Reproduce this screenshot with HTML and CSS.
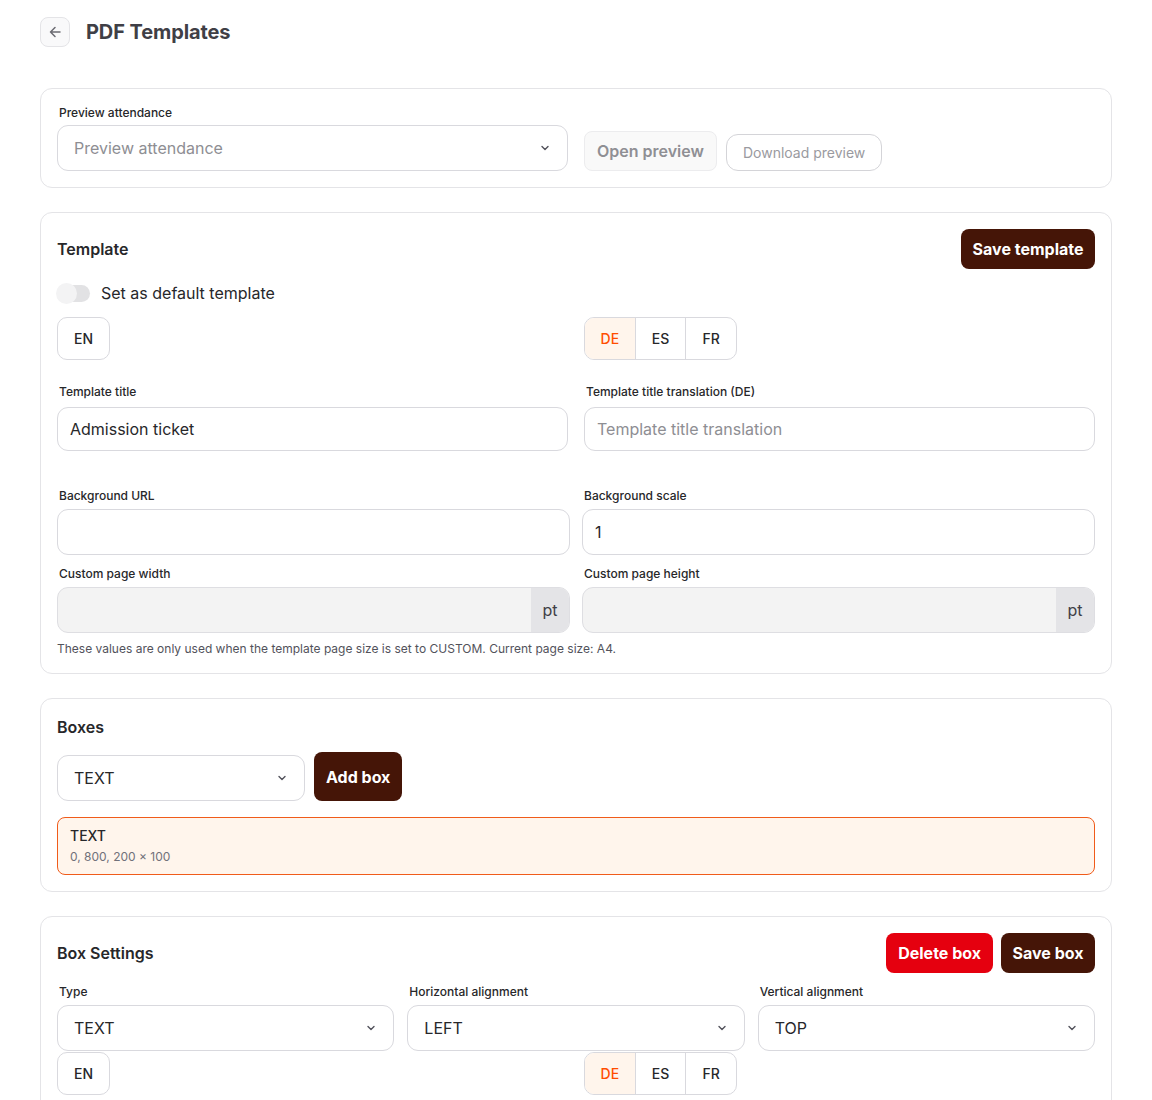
FILE: index.html
```html
<!DOCTYPE html>
<html lang="en">
<head>
<meta charset="utf-8">
<title>PDF Templates</title>
<link rel="stylesheet" href="styles.css">
</head>
<body>
<div class="page">
  <header class="topbar">
    <button class="back-btn" aria-label="Back">
      <svg width="16" height="16" viewBox="0 0 16 16" fill="none" stroke="#6b6b72" stroke-width="1.5" stroke-linecap="round" stroke-linejoin="round"><path d="M13 8H3.5M8 3.5 3.5 8 8 12.5"/></svg>
    </button>
    <h1 class="page-title">PDF Templates</h1>
  </header>

  <section class="card preview-card">
    <div class="grid-2">
      <div class="field">
        <label class="label">Preview attendance</label>
        <div class="select placeholder"><span>Preview attendance</span><svg class="chev" width="12" height="12" viewBox="0 0 12 12" fill="none" stroke="#52525b" stroke-width="1.4" stroke-linecap="round" stroke-linejoin="round"><path d="M3 4.5 6 7.5 9 4.5"/></svg></div>
      </div>
      <div class="preview-actions">
        <button class="btn-disabled">Open preview</button>
        <button class="btn-outline">Download preview</button>
      </div>
    </div>
  </section>

  <section class="card">
    <div class="card-head">
      <h2 class="card-title">Template</h2>
      <button class="btn-dark">Save template</button>
    </div>
    <div class="toggle-row">
      <span class="toggle"><span class="knob"></span></span>
      <span class="toggle-label">Set as default template</span>
    </div>
    <div class="grid-2 lang-row">
      <div><span class="lang-single">EN</span></div>
      <div class="lang-group"><span class="lang active">DE</span><span class="lang">ES</span><span class="lang">FR</span></div>
    </div>
    <div class="grid-2 title-row">
      <div class="field">
        <label class="label">Template title</label>
        <div class="input"><span>Admission ticket</span></div>
      </div>
      <div class="field">
        <label class="label">Template title translation (DE)</label>
        <div class="input placeholder"><span>Template title translation</span></div>
      </div>
    </div>
    <div class="grid-2 tight bg-row">
      <div class="field">
        <label class="label">Background URL</label>
        <div class="input tall"></div>
      </div>
      <div class="field">
        <label class="label">Background scale</label>
        <div class="input tall"><span>1</span></div>
      </div>
    </div>
    <div class="grid-2 tight size-row">
      <div class="field">
        <label class="label">Custom page width</label>
        <div class="input tall disabled"><span class="grow"></span><span class="suffix">pt</span></div>
      </div>
      <div class="field">
        <label class="label">Custom page height</label>
        <div class="input tall disabled"><span class="grow"></span><span class="suffix">pt</span></div>
      </div>
    </div>
    <p class="help">These values are only used when the template page size is set to CUSTOM. Current page size: A4.</p>
  </section>

  <section class="card">
    <h2 class="card-title boxes-title">Boxes</h2>
    <div class="add-row">
      <div class="select box-select"><span>TEXT</span><svg class="chev" width="12" height="12" viewBox="0 0 12 12" fill="none" stroke="#52525b" stroke-width="1.4" stroke-linecap="round" stroke-linejoin="round"><path d="M3 4.5 6 7.5 9 4.5"/></svg></div>
      <button class="btn-dark tall-btn">Add box</button>
    </div>
    <div class="box-item">
      <div class="box-name">TEXT</div>
      <div class="box-meta">0, 800, 200 × 100</div>
    </div>
  </section>

  <section class="card last-card">
    <div class="card-head">
      <h2 class="card-title">Box Settings</h2>
      <div class="head-actions">
        <button class="btn-red">Delete box</button>
        <button class="btn-dark">Save box</button>
      </div>
    </div>
    <div class="grid-3">
      <div class="field">
        <label class="label">Type</label>
        <div class="select"><span>TEXT</span><svg class="chev" width="12" height="12" viewBox="0 0 12 12" fill="none" stroke="#52525b" stroke-width="1.4" stroke-linecap="round" stroke-linejoin="round"><path d="M3 4.5 6 7.5 9 4.5"/></svg></div>
      </div>
      <div class="field">
        <label class="label">Horizontal alignment</label>
        <div class="select"><span>LEFT</span><svg class="chev" width="12" height="12" viewBox="0 0 12 12" fill="none" stroke="#52525b" stroke-width="1.4" stroke-linecap="round" stroke-linejoin="round"><path d="M3 4.5 6 7.5 9 4.5"/></svg></div>
      </div>
      <div class="field">
        <label class="label">Vertical alignment</label>
        <div class="select"><span>TOP</span><svg class="chev" width="12" height="12" viewBox="0 0 12 12" fill="none" stroke="#52525b" stroke-width="1.4" stroke-linecap="round" stroke-linejoin="round"><path d="M3 4.5 6 7.5 9 4.5"/></svg></div>
      </div>
    </div>
    <div class="grid-2 lang-row2">
      <div><span class="lang-single">EN</span></div>
      <div class="lang-group"><span class="lang active">DE</span><span class="lang">ES</span><span class="lang">FR</span></div>
    </div>
  </section>
</div>
</body>
</html>
```

FILE: styles.css
```css
* { box-sizing: border-box; }
html, body { margin: 0; padding: 0; background: #ffffff; }
body {
  font-family: Inter, "Noto Sans", "Liberation Sans", sans-serif;
  color: #27272a;
  -webkit-font-smoothing: antialiased;
}
button { font-family: inherit; cursor: pointer; }
.page { padding: 17px 40px 40px; }

.topbar { display: flex; align-items: center; gap: 16px; height: 30px; margin-bottom: 41px; }
.back-btn {
  width: 30px; height: 30px; border-radius: 8px;
  border: 1px solid #e4e4e7; background: #f9f9fa;
  display: flex; align-items: center; justify-content: center; padding: 0;
}
.page-title { margin: 0; font-size: 20px; font-weight: 700; color: #3f3f46; line-height: 30px; letter-spacing: -0.1px; }

.card {
  border: 1px solid #e4e4e7; border-radius: 12px;
  padding: 16px; margin-bottom: 24px; background: #fff;
}
.last-card { padding-bottom: 20px; }

.grid-2 { display: grid; grid-template-columns: 1fr 1fr; gap: 16px; }
.grid-2.tight { column-gap: 12px; }
.grid-3 { display: grid; grid-template-columns: 1fr 1fr 1fr; column-gap: 13px; }

.field { display: flex; flex-direction: column; }
.label { font-size: 12px; font-weight: 500; line-height: 16px; margin: 0 2px 5px; color: #27272a; }
.preview-card .label { margin-bottom: 4px; }
.title-row .label { margin-bottom: 7px; }

.select, .input {
  height: 46px; border: 1px solid #d9d9de; border-radius: 11px;
  display: flex; align-items: center; font-size: 16px; color: #27272a; background: #fff;
}
.select { padding: 0 16px; justify-content: space-between; }
.input { height: 44px; padding: 0 12px; }
.input.tall { height: 46px; }
.placeholder { color: #8e8e93; }
.chev { flex: none; margin-right: 0; }

.preview-actions { display: flex; align-items: flex-end; gap: 9px; padding-bottom: 0; }
.btn-disabled {
  height: 40px; padding: 0 12px; border-radius: 8px;
  border: 1px solid #ececee; background: #f9f9f9;
  font-size: 16px; font-weight: 600; color: #8f8f94;
}
.btn-outline {
  height: 37px; padding: 0 16px; border-radius: 12px;
  border: 1px solid #d4d4d8; background: #fff;
  font-size: 14px; font-weight: 400; color: #9a9aa0;
}

.card-head { display: flex; align-items: center; justify-content: space-between; height: 40px; }
.card-title { margin: 0; font-size: 16px; font-weight: 600; line-height: 24px; color: #27272a; }
.head-actions { display: flex; gap: 8px; }
.btn-dark, .btn-red {
  height: 40px; padding: 0 11.5px; border-radius: 8px; border: none;
  font-size: 16px; font-weight: 700; color: #fff;
}
.btn-dark { background: #451507; }
.btn-red { background: #e5000f; padding: 0 12px; }
.tall-btn { height: 49px; padding: 0 12px; }

.toggle-row { display: flex; align-items: center; gap: 11px; margin-top: 12px; height: 24px; }
.toggle { position: relative; width: 33px; height: 17px; border-radius: 9px; background: #e2e2e4; flex: none; }
.knob {
  position: absolute; left: -1px; top: -2px; width: 21px; height: 21px; border-radius: 50%;
  background: #f3f3f4;
}
.toggle-label { font-size: 16px; line-height: 24px; color: #27272a; }

.lang-row { margin-top: 12px; }
.lang-single {
  display: inline-flex; align-items: center; justify-content: center;
  width: 53px; height: 43px; border: 1px solid #d9d9de; border-radius: 10px;
  font-size: 14px; font-weight: 500; color: #27272a;
}
.lang-group {
  display: inline-flex; width: 153px; height: 43px;
  border: 1px solid #d9d9de; border-radius: 10px; overflow: hidden;
}
.lang {
  flex: 1; display: flex; align-items: center; justify-content: center;
  font-size: 14px; font-weight: 500; color: #27272a; border-left: 1px solid #d9d9de;
}
.lang:first-child { border-left: none; }
.lang.active { background: #fff5ec; color: #ff4d00; }

.title-row { margin-top: 24px; }
.bg-row { margin-top: 37px; }
.size-row { margin-top: 11px; }

.input.disabled { background: #f3f3f3; padding: 0; overflow: hidden; border-color: #dedee2; }
.grow { flex: 1; }
.suffix {
  align-self: stretch; width: 38px; display: flex; align-items: center; justify-content: center;
  background: #e4e4e7; font-size: 16px; color: #3f3f46;
}
.help { margin: 8px 0 0; font-size: 12px; line-height: 16px; color: #52525b; }

.boxes-title { line-height: 24px; }
.add-row { display: flex; align-items: flex-end; gap: 9px; margin-top: 13px; }
.box-select { width: 248px; }

.box-item {
  margin-top: 16px; border: 1px solid #f05b1a; border-radius: 8px; background: #fff5ec;
  padding: 9px 12px 9px;
}
.box-name { font-size: 14px; font-weight: 500; line-height: 18px; color: #27272a; }
.box-meta { margin-top: 4px; font-size: 12px; line-height: 16px; color: #71717a; }

.grid-3 { margin-top: 11px; }
.lang-row2 { margin-top: 1px; }
```
